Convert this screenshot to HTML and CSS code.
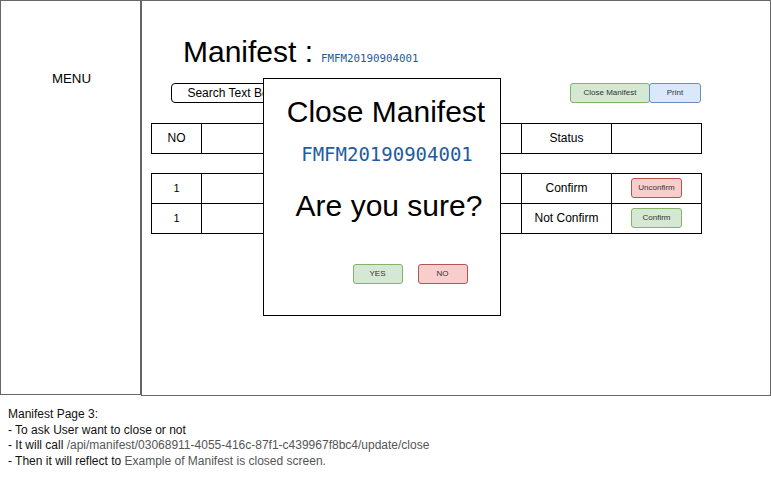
FILE: index.html
```html
<!DOCTYPE html>
<html>
<head>
<meta charset="utf-8">
<link rel="stylesheet" href="styles.css">
</head>
<body>
<div class="screen">
  <div class="menu">MENU</div>
  <div class="main">
    <div class="title-row">
      <span class="title">Manifest :</span>
      <span class="code-sm">FMFM20190904001</span>
    </div>
    <div class="toolbar">
      <div class="search">Search Text Box</div>
      <div class="actions">
        <div class="btn btn-green btn-close">Close Manifest</div>
        <div class="btn btn-blue btn-print">Print</div>
      </div>
    </div>
    <div class="grid head">
      <div class="cell">NO</div>
      <div class="cell"></div>
      <div class="cell">Status</div>
      <div class="cell"></div>
    </div>
    <div class="grid body">
      <div class="cell small">1</div>
      <div class="cell"></div>
      <div class="cell">Confirm</div>
      <div class="cell"><div class="btn btn-red btn-row">Unconfirm</div></div>
      <div class="cell small">1</div>
      <div class="cell"></div>
      <div class="cell">Not Confirm</div>
      <div class="cell"><div class="btn btn-green btn-row">Confirm</div></div>
    </div>
  </div>
  <div class="dialog">
    <div class="dlg-title">Close Manifest</div>
    <div class="code-lg">FMFM20190904001</div>
    <div class="dlg-q">Are you sure?</div>
    <div class="dlg-actions">
      <div class="btn btn-green btn-dlg">YES</div>
      <div class="btn btn-red btn-dlg">NO</div>
    </div>
  </div>
</div>
<div class="notes">
  <div>Manifest Page 3:</div>
  <div>- To ask User want to close or not</div>
  <div>- It will call <span class="muted">/api/manifest/03068911-4055-416c-87f1-c439967f8bc4/update/close</span></div>
  <div>- Then it will reflect to <span class="muted">Example of Manifest is closed screen.</span></div>
</div>
</body>
</html>
```

FILE: styles.css
```css
* { box-sizing: border-box; }
html, body { margin: 0; padding: 0; background: #fff; }
body {
  font-family: "Liberation Sans", Arial, sans-serif;
  color: #000;
  width: 771px;
  height: 483px;
  overflow: hidden;
}
.screen {
  position: relative;
  display: flex;
  align-items: flex-start;
}
.menu {
  width: 141px;
  height: 395px;
  border: 1px solid #666;
  text-align: center;
  font-size: 13.3px;
  padding-top: 70px;
  padding-left: 2px;
}
.main {
  width: 630px;
  height: 396px;
  border: 1px solid #666;
  padding: 0 0 0 9px;
  display: flex;
  flex-direction: column;
}
.title-row {
  height: 82px;
  padding: 34px 0 0 32px;
  display: flex;
  align-items: baseline;
  white-space: nowrap;
}
.title { font-size: 30px; }
.code-sm {
  font-family: "DejaVu Sans Mono", monospace;
  font-size: 10.8px;
  color: #1f5c9e;
  margin-left: 8px;
}
.toolbar {
  width: 550px;
  height: 20px;
  display: flex;
  justify-content: space-between;
  align-items: center;
}
.search {
  margin-left: 20px;
  width: 120px;
  height: 20px;
  border: 1px solid #000;
  border-radius: 4px;
  font-size: 12px;
  line-height: 18px;
  text-align: center;
  white-space: nowrap;
}
.actions { display: flex; }
.btn {
  border: 1px solid;
  border-radius: 3px;
  font-size: 8px;
  color: #333;
  text-align: center;
  height: 20px;
  line-height: 18px;
}
.btn-green { background: #d5e8d4; border-color: #82b366; }
.btn-blue { background: #dae8fc; border-color: #6c8ebf; }
.btn-red { background: #f8cecc; border-color: #b85450; }
.btn-close { width: 80px; }
.btn-print { width: 52px; margin-left: -1px; }
.grid {
  display: grid;
  grid-template-columns: 50px 320px 90px 90px;
  width: 551px;
  border-top: 1px solid #000;
  border-left: 1px solid #000;
  grid-auto-rows: 30px;
}
.head { margin-top: 20px; }
.body { margin-top: 19px; }
.cell {
  border-right: 1px solid #000;
  border-bottom: 1px solid #000;
  display: flex;
  align-items: center;
  justify-content: center;
  font-size: 12px;
  padding-bottom: 1px;
}
.cell.small { font-size: 11px; }
.btn-row { width: 51px; }
.dialog {
  position: absolute;
  left: 263px;
  top: 78px;
  width: 238px;
  height: 238px;
  background: #fff;
  border: 1px solid #000;
  display: flex;
  flex-direction: column;
  align-items: center;
}
.dlg-title {
  font-size: 30px;
  margin-top: 16px;
  line-height: 34px;
  padding-left: 8px;
}
.code-lg {
  font-family: "DejaVu Sans Mono", monospace;
  font-size: 19px;
  color: #1f5c9e;
  margin-top: 13px;
  line-height: 24px;
  padding-left: 10px;
}
.dlg-q {
  font-size: 30px;
  line-height: 34px;
  margin-top: 23px;
  padding-left: 14px;
}
.dlg-actions {
  display: flex;
  gap: 15px;
  margin-top: 41px;
  margin-left: 56px;
}
.btn-dlg { width: 50px; height: 20px; }
.notes {
  padding: 11px 0 0 8px;
  font-size: 12px;
  line-height: 15.7px;
  color: #111;
}
.muted { color: #555; }
```
